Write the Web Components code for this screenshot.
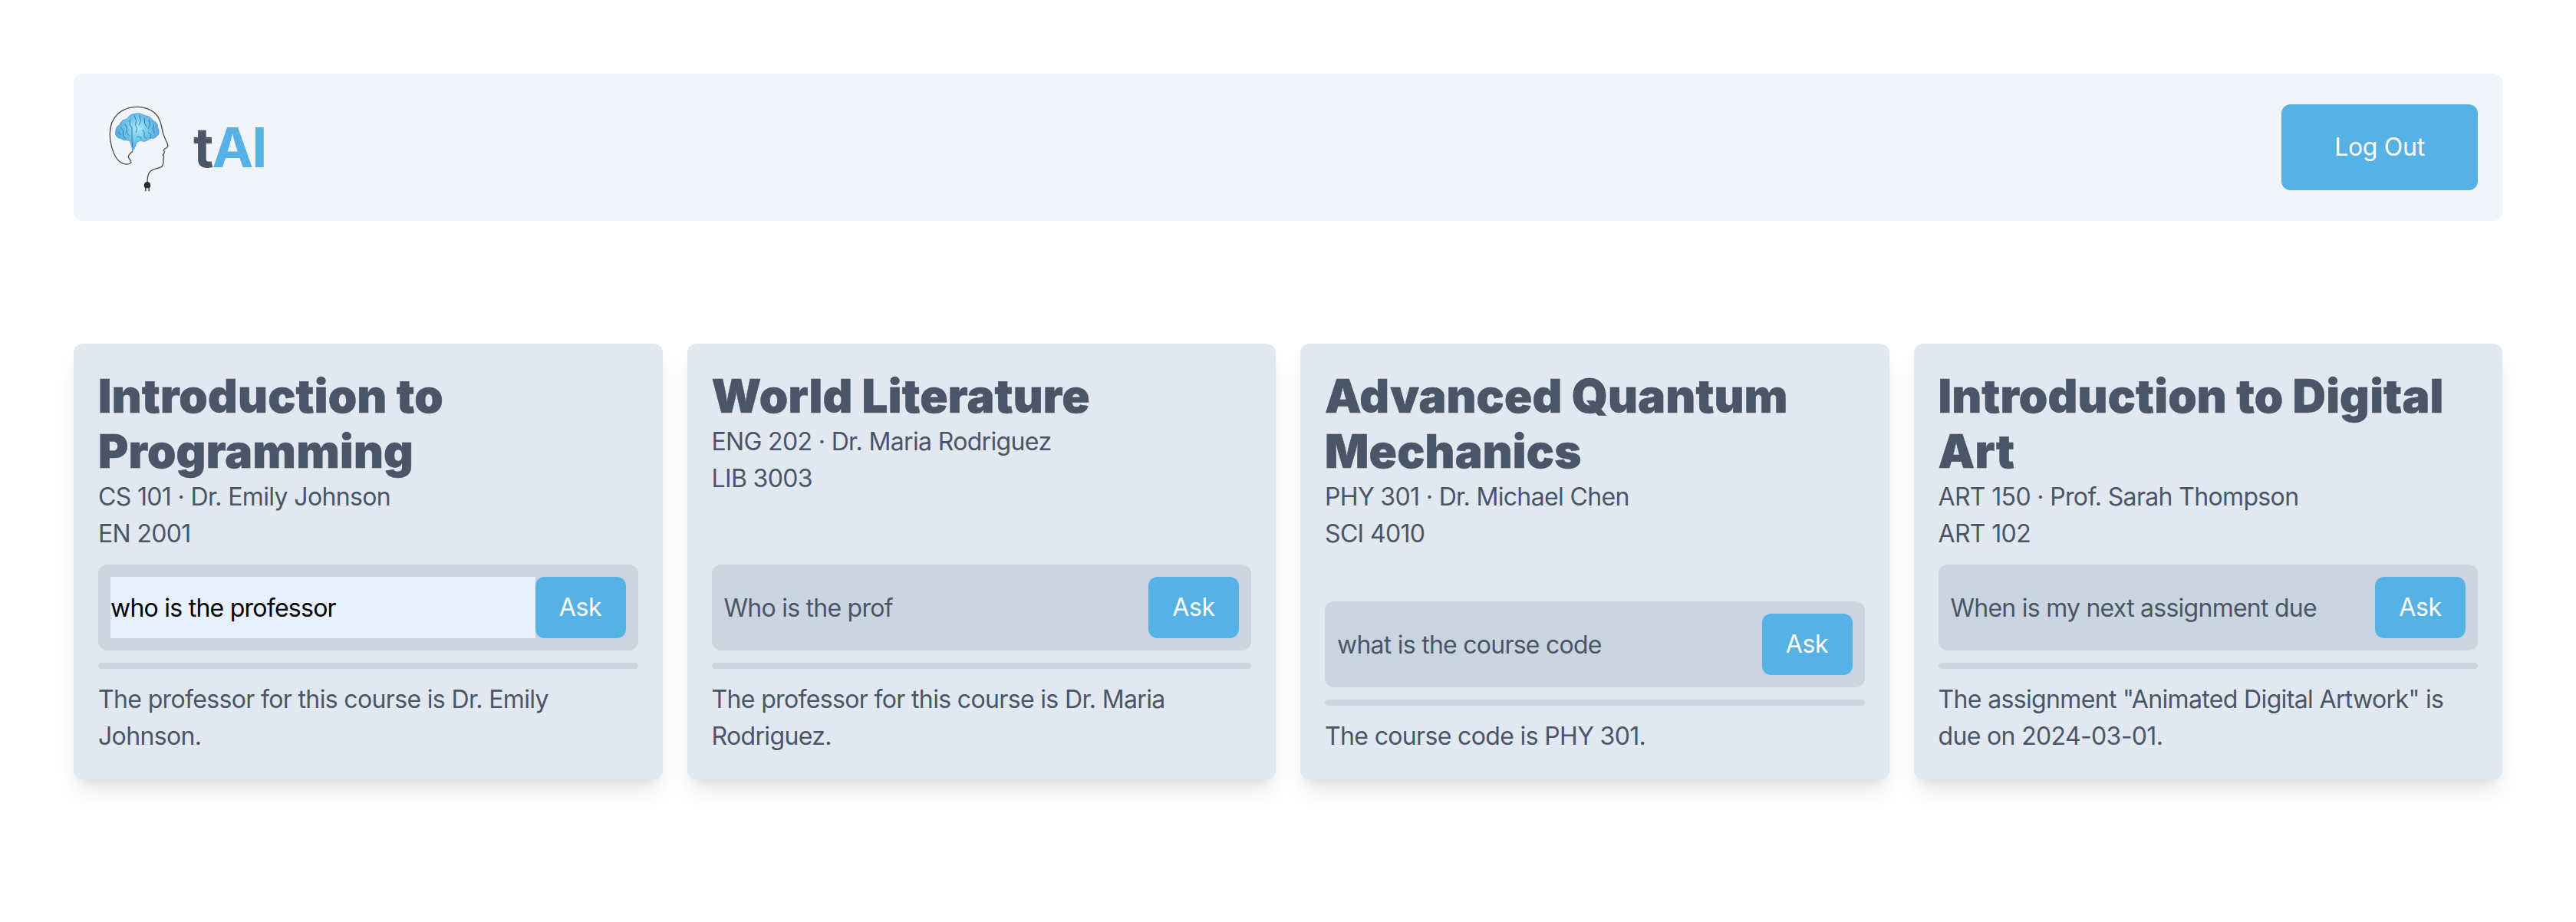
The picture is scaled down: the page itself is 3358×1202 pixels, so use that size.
<!DOCTYPE html>
<html lang="en">
<head>
<meta charset="utf-8">
<title>tAI</title>
<style>
  html, body { margin: 0; padding: 0; background: #fff; }
  body { font-family: Inter, "Liberation Sans", sans-serif; }
</style>
</head>
<body>
<tai-app>
  <tai-header slot="header"></tai-header>

  <course-card heading="Introduction to Programming" question="who is the professor" autofilled>
    <span slot="meta">CS 101 · Dr. Emily Johnson</span>
    <span slot="room">EN 2001</span>
    The professor for this course is Dr. Emily Johnson.
  </course-card>

  <course-card heading="World Literature" question="Who is the prof">
    <span slot="meta">ENG 202 · Dr. Maria Rodriguez</span>
    <span slot="room">LIB 3003</span>
    The professor for this course is Dr. Maria Rodriguez.
  </course-card>

  <course-card heading="Advanced Quantum Mechanics" question="what is the course code">
    <span slot="meta">PHY 301 · Dr. Michael Chen</span>
    <span slot="room">SCI 4010</span>
    The course code is PHY 301.
  </course-card>

  <course-card heading="Introduction to Digital Art" question="When is my next assignment due">
    <span slot="meta">ART 150 · Prof. Sarah Thompson</span>
    <span slot="room">ART 102</span>
    The assignment "Animated Digital Artwork" is due on 2024-03-01.
  </course-card>
</tai-app>

<script>
class TaiApp extends HTMLElement {
  constructor() {
    super();
    this.attachShadow({ mode: 'open' });
    this.shadowRoot.innerHTML = `
      <style>
        :host { display: block; box-sizing: border-box; min-height: 1202px; padding: 96px; }
        .cards {
          display: grid;
          grid-template-columns: repeat(4, minmax(0, 1fr));
          gap: 32px;
          margin-top: 160px;
        }
      </style>
      <slot name="header"></slot>
      <div class="cards"><slot></slot></div>
    `;
  }
}

class TaiButton extends HTMLElement {
  constructor() {
    super();
    this.attachShadow({ mode: 'open' });
    this.shadowRoot.innerHTML = `
      <style>
        :host { display: block; flex: none; }
        button {
          display: block;
          width: 100%;
          height: 100%;
          padding: 0;
          border: none;
          border-radius: 12px;
          background: #56b1e5;
          color: #fff;
          font: 400 32px/48px Inter, "Liberation Sans", sans-serif;
          letter-spacing: -0.3px;
          cursor: pointer;
        }
      </style>
      <button><slot></slot></button>
    `;
  }
}

class TaiHeader extends HTMLElement {
  constructor() {
    super();
    this.attachShadow({ mode: 'open' });
    this.shadowRoot.innerHTML = `
      <style>
        :host {
          display: flex;
          align-items: center;
          justify-content: space-between;
          height: 192px;
          padding: 0 32px 0 24px;
          box-sizing: border-box;
          background: #f1f5f9;
          border-radius: 12px;
        }
        .logo { display: flex; align-items: center; gap: 12px; }
        svg { display: block; width: 120px; height: 144px; flex: none; filter: blur(.4px); }
        .word {
          font: 700 72px/80px Inter, "Liberation Sans", sans-serif;
          letter-spacing: -2px;
          color: #4a5568;
        }
        .word b { font-weight: 700; color: #56b1e5; }
        tai-button { width: 256px; height: 112px; }
      </style>
      <div class="logo">
        <svg viewBox="0 0 360 432" fill="none" aria-hidden="true">
          <defs>
            <radialGradient id="brain" gradientUnits="userSpaceOnUse" cx="178" cy="142" r="90">
              <stop offset="0" stop-color="#aeeefa"/>
              <stop offset=".45" stop-color="#74c8ec"/>
              <stop offset="1" stop-color="#4ea9de"/>
            </radialGradient>
          </defs>
          <!-- head and cord -->
          <path d="M158 232C150 240 141 246 142 254C144 264 156 268 152 276C146 286 124 284 108 272C90 258 78 226 72 192C66 150 72 112 100 86C126 62 170 52 206 62C244 72 266 100 272 136C275 156 280 172 290 192C296 204 300 212 292 218C284 222 278 224 282 232C286 238 280 242 277 246C282 252 282 258 278 264C280 274 280 286 270 293C258 300 242 298 230 308C218 318 216 332 216 352"
            stroke="#4a4a4c" stroke-width="4" stroke-linecap="round"/>
          <!-- plug -->
          <path d="M203 366C203 356 209 351 216 351C223 351 229 356 229 366C229 372 225 375 221 376H211C207 375 203 372 203 366Z" fill="#2b2b2d"/>
          <path d="M209.500 374V388M222.500 374V388" stroke="#2b2b2d" stroke-width="4"/>
          <!-- brain -->
          <path d="M158 230C156 216 152 200 146 190C136 188 124 190 112 182C98 180 90 170 92 156C92 142 98 132 108 128C112 114 124 106 136 106C142 92 158 84 174 84C186 80 198 88 206 92C220 92 232 100 238 112C250 116 258 126 256 138C264 148 264 164 254 172C248 182 236 182 226 182C216 192 202 196 190 190C180 194 174 196 172 204C170 214 164 224 158 230Z"
            fill="url(#brain)" stroke="#3e93c8" stroke-width="2"/>
          <!-- circuit traces -->
          <g stroke="#38799f" stroke-width="3" stroke-linecap="round" stroke-linejoin="round">
            <path d="M112 140L122 152V172L132 182"/>
            <path d="M128 124L136 138V160L146 172"/>
            <path d="M148 108V128L156 140V186L158 214"/>
            <path d="M166 92L172 110L170 130L176 142L172 158"/>
            <path d="M186 92L190 112L184 128"/>
            <path d="M204 100L206 124L214 136"/>
            <path d="M224 110L226 128L220 142"/>
            <path d="M242 128L238 146L244 160"/>
            <path d="M176 176C184 170 190 176 192 184"/>
            <path d="M198 148L204 158V176L214 182"/>
            <path d="M220 158L230 166V178"/>
            <path d="M104 156L110 166"/>
          </g>
        </svg>
        <span class="word">t<b>AI</b></span>
      </div>
      <tai-button>Log Out</tai-button>
    `;
  }
}

class AskBox extends HTMLElement {
  static get observedAttributes() { return ['question']; }

  constructor() {
    super();
    this.attachShadow({ mode: 'open' });
    this.shadowRoot.innerHTML = `
      <style>
        :host {
          display: flex;
          padding: 16px;
          background: #cbd5e0;
          border-radius: 12px;
        }
        input {
          flex: 1;
          min-width: 0;
          height: 80px;
          box-sizing: border-box;
          margin: 0;
          padding: 0;
          border: none;
          outline: none;
          background: transparent;
          color: #4a5568;
          font: 400 32px Inter, "Liberation Sans", sans-serif;
          letter-spacing: -0.75px;
        }
        :host([autofilled]) input { background: #e8f0fe; color: #000; }
        tai-button { width: 118px; height: 80px; }
      </style>
      <input type="text">
      <tai-button>Ask</tai-button>
    `;
  }

  attributeChangedCallback(name, oldValue, value) {
    this.shadowRoot.querySelector('input').value = value || '';
  }
}

class CourseCard extends HTMLElement {
  constructor() {
    super();
    this.attachShadow({ mode: 'open' });
    this.shadowRoot.innerHTML = `
      <style>
        :host {
          display: flex;
          flex-direction: column;
          box-sizing: border-box;
          padding: 32px;
          background: #e2e8f0;
          border-radius: 12px;
          box-shadow: 0 20px 30px -6px rgba(0,0,0,.1), 0 8px 12px -8px rgba(0,0,0,.1);
          color: #4a5568;
          font: 400 32px/48px Inter, "Liberation Sans", sans-serif;
          letter-spacing: -0.65px;
        }
        h2 {
          margin: 0;
          font-size: 60px;
          line-height: 72px;
          font-weight: 900;
          letter-spacing: 0.2px;
          -webkit-text-stroke: 0.5px #4a5568;
        }
        .line { display: block; }
        ask-box { margin-top: auto; }
        .spacer { flex: none; height: 16px; }
        hr {
          flex: none;
          height: 8px;
          margin: 16px 0;
          border: none;
          border-radius: 4px;
          background: #cbd5e0;
        }
      </style>
      <h2></h2>
      <span class="line"><slot name="meta"></slot></span>
      <span class="line"><slot name="room"></slot></span>
      <div class="spacer"></div>
      <ask-box></ask-box>
      <hr>
      <div class="response"><slot></slot></div>
    `;
  }

  connectedCallback() {
    this.shadowRoot.querySelector('h2').textContent = this.getAttribute('heading');
    let box = this.shadowRoot.querySelector('ask-box');
    box.setAttribute('question', this.getAttribute('question'));
    if (this.hasAttribute('autofilled')) box.setAttribute('autofilled', '');
  }
}

customElements.define('tai-button', TaiButton);
customElements.define('ask-box', AskBox);
customElements.define('tai-header', TaiHeader);
customElements.define('course-card', CourseCard);
customElements.define('tai-app', TaiApp);
</script>
</body>
</html>
